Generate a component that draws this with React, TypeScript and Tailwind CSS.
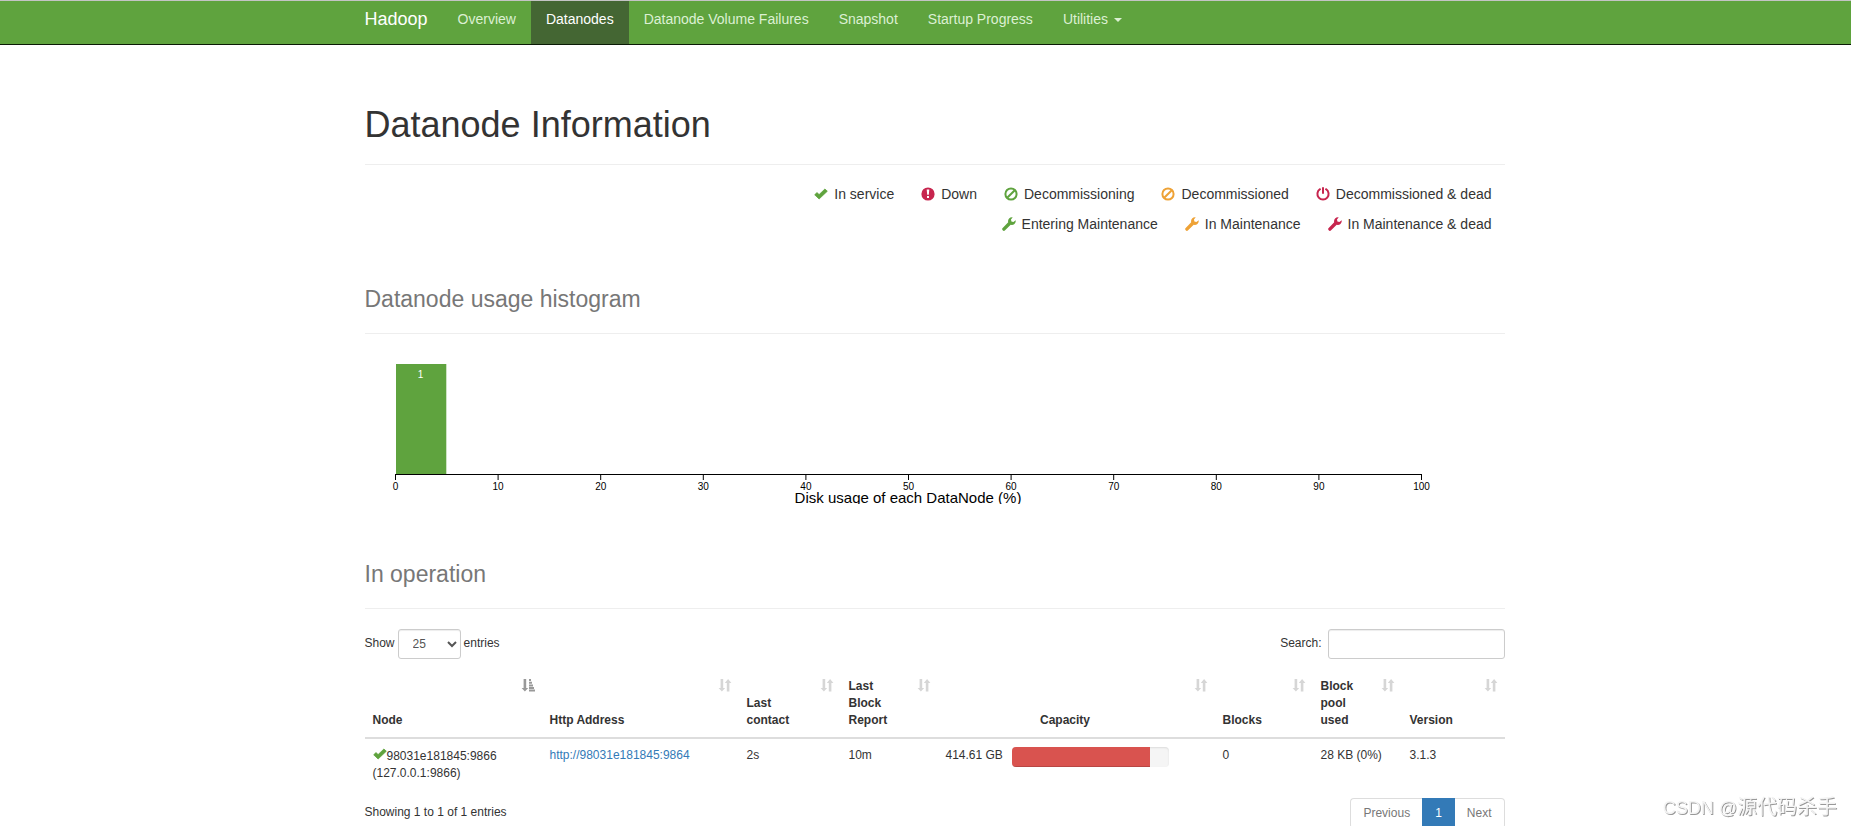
import type { ReactNode } from "react";

const navLinks = [
  { label: "Overview" },
  { label: "Datanodes", active: true },
  { label: "Datanode Volume Failures" },
  { label: "Snapshot" },
  { label: "Startup Progress" },
];

const legendRows = [
  [
    { icon: "ok", color: "text-[#5fa33e]", label: "In service" },
    { icon: "alert", color: "text-[#c7254e]", label: "Down" },
    { icon: "ban", color: "text-[#5fa33e]", label: "Decommissioning" },
    { icon: "ban", color: "text-[#eea236]", label: "Decommissioned" },
    { icon: "off", color: "text-[#c7254e]", label: "Decommissioned & dead" },
  ],
  [
    { icon: "wrench", color: "text-[#5fa33e]", label: "Entering Maintenance" },
    { icon: "wrench", color: "text-[#eea236]", label: "In Maintenance" },
    { icon: "wrench", color: "text-[#c7254e]", label: "In Maintenance & dead" },
  ],
];

const columns = [
  { label: "Node", width: "w-[177px]", sorted: true },
  { label: "Http Address", width: "w-[197px]" },
  { label: "Last contact", width: "w-[102px]" },
  { label: "Last Block Report", width: "w-[97px]" },
  { label: "Capacity", width: "w-[277px]", center: true },
  { label: "Blocks", width: "w-[98px]" },
  { label: "Block pool used", width: "w-[89px]" },
  { label: "Version", width: "w-[103px]" },
];

const nodes = [
  {
    name: "98031e181845:9866",
    address: "(127.0.0.1:9866)",
    http: "http://98031e181845:9864",
    lastContact: "2s",
    lastBlockReport: "10m",
    capacity: "414.61 GB",
    usedPercent: 88,
    blocks: 0,
    blockPoolUsed: "28 KB (0%)",
    version: "3.1.3",
  },
];

const icons: Record<string, ReactNode> = {
  ok: (
    <path
      d="M0.7 7.8 3 5.6 5.1 7.6 10.9 2 13.3 4.2 5.1 12Z"
      stroke="currentColor"
      strokeWidth="0.8"
      strokeLinejoin="round"
    />
  ),
  alert: (
    <>
      <circle cx="7" cy="7" r="6.6" />
      <path d="M5.7 2.6h2.6l-.5 5.2H6.2ZM6 9h2v2.1H6Z" fill="#fff" />
    </>
  ),
  ban: (
    <g fill="none" stroke="currentColor" strokeWidth="2">
      <circle cx="7" cy="7" r="5.6" />
      <path d="M3.2 10.8 10.8 3.2" />
    </g>
  ),
  off: (
    <g fill="none" stroke="currentColor" strokeWidth="2" strokeLinecap="round">
      <path d="M4 2.2a5.6 5.6 0 1 0 6 0" />
      <path d="M7 1v5" />
    </g>
  ),
  wrench: (
    <path d="M10.7.3A4 4 0 0 0 6.2 5.3L.7 10.9a1.6 1.6 0 0 0 2.4 2.4L8.7 7.8A4 4 0 0 0 13.7 3.3L11.4 5 9.4 4.6 9 2.6Z" />
  ),
  sort: <path d="M2.6 1h2.6v9h2L3.9 13.6.6 10h2ZM8.8 13.6V5h-2l3.3-4 3.3 4h-2v8.6Z" />,
  sortAsc: (
    <path d="M2.6 1h2.6v9h2L3.9 13.6.6 10h2ZM8 1h2v2H8ZM8 3.7h3v2H8ZM8 6.4h4v2H8ZM8 9.1h5v2H8ZM8 11.6h6v2H8Z" />
  ),
};

function Icon({ name, className = "" }: { name: string; className?: string }) {
  return (
    <svg viewBox="0 0 14 14" fill="currentColor" aria-hidden="true" className={`h-3.5 w-3.5 ${className}`}>
      {icons[name]}
    </svg>
  );
}

function Navbar() {
  return (
    <nav className="flex justify-center border-t border-b border-t-[#c4c4c4] border-b-[#0a1a05] bg-[#5fa33e] pl-[18px]">
      <div className="flex w-full max-w-[1140px] text-sm leading-5 text-[#dcf0d3]">
        <a href="#" className="pt-2 pr-[15px] pb-[15px] text-lg leading-5 text-white">
          Hadoop
        </a>
        {navLinks.map((link) => (
          <a
            key={link.label}
            href="#"
            className={`px-[15px] pt-2 pb-[15px] ${link.active ? "bg-[#446633] text-white" : ""}`}
          >
            {link.label}
          </a>
        ))}
        <button type="button" className="flex items-center gap-1.5 px-[15px] pt-2 pb-[15px]">
          Utilities
          <span className="mt-0.5 border-x-4 border-t-4 border-x-transparent border-t-[#dcf0d3]" />
        </button>
      </div>
    </nav>
  );
}

function SectionTitle({ children }: { children: ReactNode }) {
  return (
    <h2 className="border-b border-[#eee] pt-[11px] pb-5 text-[23px] leading-7 text-[#777]">
      {children}
    </h2>
  );
}

function Legend() {
  return (
    <div className="mt-[19px] flex flex-col gap-[10px] pr-[13px] text-sm leading-5">
      {legendRows.map((row, i) => (
        <ul key={i} className="flex justify-end gap-[27px]">
          {row.map((item) => (
            <li key={item.label} className="flex items-center gap-1.5">
              <Icon name={item.icon} className={item.color} />
              {item.label}
            </li>
          ))}
        </ul>
      ))}
    </div>
  );
}

function Histogram() {
  const ticks = [0, 10, 20, 30, 40, 50, 60, 70, 80, 90, 100];
  const x = (value: number) => 30.5 + value * 10.26;

  return (
    <svg viewBox="0 0 1140 150" className="mt-5 w-full overflow-hidden" fontSize="10">
      <rect x="31" y="10" width="50.3" height="110" fill="#5fa33e" />
      <text x="55.5" y="24" textAnchor="middle" fill="#fff">
        1
      </text>
      <path d="M30.5 126V120.5H1056.5V126" fill="none" stroke="#000" />
      {ticks.map((tick) => (
        <g key={tick}>
          <line x1={x(tick)} x2={x(tick)} y1="120" y2="126" stroke="#000" />
          <text x={x(tick)} y="136" textAnchor="middle">
            {tick}
          </text>
        </g>
      ))}
      <text x="543" y="149" textAnchor="middle" fontSize="15">
        Disk usage of each DataNode (%)
      </text>
    </svg>
  );
}

function NodeTable() {
  return (
    <table className="mt-[11px] w-full table-fixed text-left">
      <thead>
        <tr className="border-b-2 border-[#ddd]">
          {columns.map((col) => (
            <th
              key={col.label}
              className={`relative py-2 pr-[30px] pl-2 align-bottom font-bold ${col.width} ${
                col.center ? "text-center" : ""
              }`}
            >
              {col.label}
              <Icon
                name={col.sorted ? "sortAsc" : "sort"}
                className={`absolute top-2 right-[7px] ${col.sorted ? "text-[#999]" : "text-[#d6d6d6]"}`}
              />
            </th>
          ))}
        </tr>
      </thead>
      <tbody>
        {nodes.map((node) => (
          <tr key={node.name} className="align-top">
            <td className="p-2">
              <div className="flex items-center leading-[18px]">
                <Icon name="ok" className="mb-1 text-[#5fa33e]" />
                {node.name}
              </div>
              {node.address}
            </td>
            <td className="p-2">
              <a href="#" className="text-[#337ab7]">
                {node.http}
              </a>
            </td>
            <td className="p-2">{node.lastContact}</td>
            <td className="p-2">{node.lastBlockReport}</td>
            <td className="p-2">
              <div className="flex gap-[9px]">
                <span className="whitespace-nowrap">{node.capacity}</span>
                <div className="h-5 w-[157px] overflow-hidden rounded bg-[#f5f5f5] shadow-[inset_0_1px_2px_rgba(0,0,0,0.1)]">
                  <div
                    className="h-full bg-[#d9534f] shadow-[inset_0_-1px_0_rgba(0,0,0,0.15)]"
                    style={{ width: `${node.usedPercent}%` }}
                  />
                </div>
              </div>
            </td>
            <td className="p-2">{node.blocks}</td>
            <td className="p-2">{node.blockPoolUsed}</td>
            <td className="p-2">{node.version}</td>
          </tr>
        ))}
      </tbody>
    </table>
  );
}

export default function App() {
  return (
    <div className="relative bg-white font-['Liberation_Sans',Arial,sans-serif] text-[#333]">
      <Navbar />
      <main className="flex justify-center pl-[18px]">
        <div className="w-full max-w-[1140px]">
          <h1 className="mt-[60px] border-b border-[#eee] pb-[19px] text-4xl leading-10">
            Datanode Information
          </h1>
          <Legend />

          <section className="mt-10">
            <SectionTitle>Datanode usage histogram</SectionTitle>
            <Histogram />
          </section>

          <section className="mt-[45px] text-xs leading-[17px]">
            <SectionTitle>In operation</SectionTitle>
            <div className="mt-5 flex items-center justify-between">
              <label className="flex items-center gap-[3px]">
                <span className="pb-0.5">Show</span>
                <select
                  defaultValue="25"
                  className="h-[30px] w-[63px] rounded-[3px] border border-[#ccc] bg-white px-[10px] text-[#555] shadow-[inset_0_1px_1px_rgba(0,0,0,0.075)]"
                >
                  <option>25</option>
                  <option>50</option>
                  <option>100</option>
                </select>
                <span className="pb-0.5">entries</span>
              </label>
              <label className="flex items-center gap-1.5">
                <span className="pb-0.5">Search:</span>
                <input
                  type="search"
                  className="h-[30px] w-[177px] rounded-[3px] border border-[#ccc] px-[10px] shadow-[inset_0_1px_1px_rgba(0,0,0,0.075)]"
                />
              </label>
            </div>
            <NodeTable />
            <div className="mt-2 flex justify-between">
              <p className="pt-1.5">Showing 1 to 1 of 1 entries</p>
              <div className="flex text-[#777]">
                <button type="button" className="rounded-l border border-r-0 border-[#ddd] px-3 py-1.5">
                  Previous
                </button>
                <button type="button" className="border border-[#337ab7] bg-[#337ab7] px-3 py-1.5 text-white">
                  1
                </button>
                <button type="button" className="rounded-r border border-l-0 border-[#ddd] px-3 py-1.5">
                  Next
                </button>
              </div>
            </div>
          </section>
        </div>
      </main>
      <p className="fixed right-3.5 bottom-1 font-['Liberation_Sans','Noto_Sans_CJK_SC',sans-serif] text-lg leading-7 text-[#f4f4f4] [text-shadow:1px_1px_0_#999]">
        CSDN @<span className="text-xl leading-7">源代码杀手</span>
      </p>
    </div>
  );
}
